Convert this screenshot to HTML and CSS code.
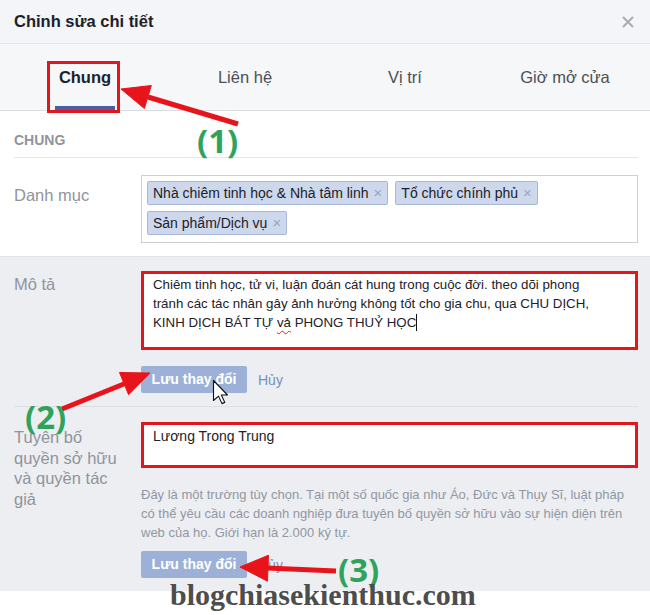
FILE: index.html
```html
<!DOCTYPE html>
<html lang="vi">
<head>
<meta charset="utf-8">
<title>Chỉnh sửa chi tiết</title>
<link rel="stylesheet" href="styles.css">
</head>
<body>
<div class="dialog">
  <header class="hd">
    <h1 class="hd-title">Chỉnh sửa chi tiết</h1>
    <svg class="close" width="12" height="12" viewBox="0 0 12 12"><path d="M1 1L11 11M11 1L1 11" stroke="#a9acb1" stroke-width="2"/></svg>
  </header>
  <nav class="tabs">
    <div class="tab active"><span class="tab-label">Chung</span><span class="tab-bar"></span></div>
    <div class="tab"><span class="tab-label">Liên hệ</span></div>
    <div class="tab"><span class="tab-label">Vị trí</span></div>
    <div class="tab"><span class="tab-label">Giờ mở cửa</span></div>
  </nav>
  <section class="general">
    <h2 class="sec-title">CHUNG</h2>
    <div class="row row-cat">
      <div class="label label-cat">Danh mục</div>
      <div class="tagbox">
        <span class="tag">Nhà chiêm tinh học &amp; Nhà tâm linh<i class="tag-x">×</i></span>
        <span class="tag">Tổ chức chính phủ<i class="tag-x">×</i></span>
        <span class="tag">Sản phẩm/Dịch vụ<i class="tag-x">×</i></span>
      </div>
    </div>
  </section>
  <section class="edit">
    <div class="row">
      <div class="label label-desc">Mô tả</div>
      <div class="field">
        <div class="textbox textbox-desc">Chiêm tinh học, tử vi, luận đoán cát hung trong cuộc đời. theo dõi phong<br>tránh các tác nhân gây ảnh hưởng không tốt cho gia chu, qua CHU DỊCH,<br>KINH DỊCH BÁT TỰ <span class="typo">vả</span> PHONG THUỶ HỌC<span class="caret"></span></div>
        <div class="actions actions-1">
          <span class="btn">Lưu thay đổi</span><span class="cancel">Hủy</span>
        </div>
      </div>
    </div>
    <div class="sep"></div>
    <div class="row row-copy">
      <div class="label label-copy">Tuyên bố<br>quyền sở hữu<br>và quyền tác<br>giả</div>
      <div class="field">
        <div class="textbox textbox-copy">Lương Trong Trung</div>
        <p class="help">Đây là một trường tùy chọn. Tại một số quốc gia như Áo, Đức và Thụy Sĩ, luật pháp<br>có thể yêu cầu các doanh nghiệp đưa tuyên bố quyền sở hữu vào sự hiện diện trên<br>web của họ. Giới hạn là 2.000 ký tự.</p>
        <div class="actions actions-2">
          <span class="btn">Lưu thay đổi</span><span class="cancel">Hủy</span>
        </div>
      </div>
    </div>
  </section>
  <section class="next">
    <div class="label">Địa chỉ web</div>
  </section>

  <svg class="marks" width="650" height="615" viewBox="0 0 650 615">
    <rect x="48.5" y="62.5" width="70" height="49" fill="none" stroke="#e3161d" stroke-width="3"/>
    <g fill="#e8141b" stroke="#e8141b">
      <line x1="238" y1="124" x2="148" y2="97" stroke-width="5"/>
      <polygon points="121,89 151.3,85.5 144.4,108.5" stroke-width="1"/>
      <line x1="62" y1="409" x2="125" y2="383.5" stroke-width="5"/>
      <polygon points="150,373 128.6,394.7 119.5,372.5" stroke-width="1"/>
      <line x1="336" y1="571" x2="267" y2="568" stroke-width="5"/>
      <polygon points="240,567 267.5,581.2 268.5,555.2" stroke-width="1"/>
    </g>
    <path transform="translate(213.5 380.5) scale(1.25)" d="M0 0L0 16L4 12.5L6.8 18.5L9 17.5L6.3 11.6L11.2 11.6Z" fill="#fff" stroke="#111" stroke-width="0.9" stroke-linejoin="round"/>
  </svg>
  <span class="num num-1">(1)</span>
  <span class="num num-2">(2)</span>
  <span class="num num-3">(3)</span>
  <span class="watermark">blogchiasekienthuc.com</span>
</div>
</body>
</html>
```
FILE: styles.css
```css
* { box-sizing: border-box; }
html, body { margin: 0; padding: 0; }
body {
  width: 650px;
  height: 615px;
  overflow: hidden;
  background: #fff;
  font-family: "Liberation Sans", Arial, sans-serif;
  color: #1d2129;
}
.dialog { position: relative; width: 650px; height: 615px; overflow: hidden; }

.hd {
  height: 44px;
  background: #f3f5f8;
  border-bottom: 1px solid #e2e4e8;
  display: flex;
  align-items: center;
  justify-content: space-between;
  padding: 0 16px 0 14px;
}
.hd-title { margin: 0; font-size: 16.5px; font-weight: bold; color: #1d2129; }

.tabs {
  display: grid;
  grid-template-columns: repeat(4, 160px);
  padding: 0 5px;
  height: 67px;
  background: #f6f7f9;
  border-bottom: 1px solid #dadde1;
}
.tab { display: flex; flex-direction: column; align-items: center; }
.tab-label { padding-top: 23px; line-height: 20px; font-size: 16.5px; color: #4b4f56; }
.tab.active .tab-label { font-weight: bold; color: #1d2129; }
.tab-bar { margin-top: auto; width: 60px; height: 4px; background: #4a5da6; }

.general { padding: 0 12px 13px 14px; }
.sec-title {
  margin: 0;
  padding: 21px 0 8px;
  font-size: 14px;
  line-height: 17px;
  font-weight: bold;
  color: #90949c;
  border-bottom: 1px solid #e5e6e9;
}
.row { display: flex; }
.row-cat { margin-top: 17px; }
.label { width: 127px; flex: none; font-size: 16.5px; line-height: 20px; color: #90949c; }
.label-cat { padding-top: 10px; }
.tagbox {
  flex: 1;
  height: 68px;
  border: 1px solid #ccd0d5;
  background: #fff;
  padding: 5px 5px 0;
  display: flex;
  flex-wrap: wrap;
  align-content: flex-start;
  gap: 6px 7px;
}
.tag {
  height: 24px;
  line-height: 22px;
  padding: 0 5px;
  border: 1px solid #a6b7da;
  border-radius: 2px;
  background: #cdd8ec;
  font-size: 14px;
  color: #1d2129;
  white-space: nowrap;
}
.tag-x { font-style: normal; color: #9aa6bd; font-size: 15px; margin-left: 5px; }

.edit {
  background: #eceef2;
  border-top: 1px solid #e0e2e6;
  padding: 14px 12px 13px 14px;
}
.field { flex: 1; }
.label-desc { padding-top: 3px; }
.textbox {
  background: #fff;
  border: 3px solid #e2161d;
  padding: 1px 9px;
  font-size: 14px;
  line-height: 19px;
  color: #1d2129;
  white-space: nowrap;
}
.textbox-desc { height: 79px; font-size: 13.3px; }
.textbox-copy { height: 46px; padding-top: 2px; }
.typo { text-decoration: underline wavy #e0262b; text-decoration-thickness: 1px; text-underline-offset: 3px; }
.caret { display: inline-block; width: 1px; height: 17px; background: #111; vertical-align: -4px; }

.actions { display: flex; align-items: center; }
.actions-1 { margin-top: 16px; }
.actions-2 { margin-top: 9.5px; }
.btn {
  width: 106px;
  height: 27px;
  line-height: 27px;
  text-align: center;
  background: #9cb0d8;
  border-radius: 2px;
  color: #fff;
  font-weight: bold;
  font-size: 14px;
}
.cancel { margin-left: 11px; font-size: 14px; color: #7a8eba; }

.sep { margin: 13px 0 15px; height: 1px; background: #dcdee2; }
.label-copy { padding-top: 5px; line-height: 20.5px; }
.help {
  margin: 16.5px 0 0;
  font-size: 13px;
  line-height: 19px;
  color: #9197a3;
  white-space: nowrap;
}

.next { padding: 21px 14px 0; }

.marks { position: absolute; left: 0; top: 0; pointer-events: none; }
.num {
  position: absolute;
  font-family: "Open Sans", sans-serif;
  font-weight: 700;
  font-size: 33px;
  line-height: 33px;
  color: #2fa35c;
}
.num-1 { left: 197px; top: 124px; }
.num-2 { left: 25px; top: 400px; }
.num-3 { left: 338px; top: 553px; }
.watermark {
  position: absolute;
  left: 170px;
  top: 580px;
  font-family: "Liberation Serif", serif;
  font-weight: bold;
  font-size: 30px;
  line-height: 30px;
  color: #4d4d4d;
}
```
